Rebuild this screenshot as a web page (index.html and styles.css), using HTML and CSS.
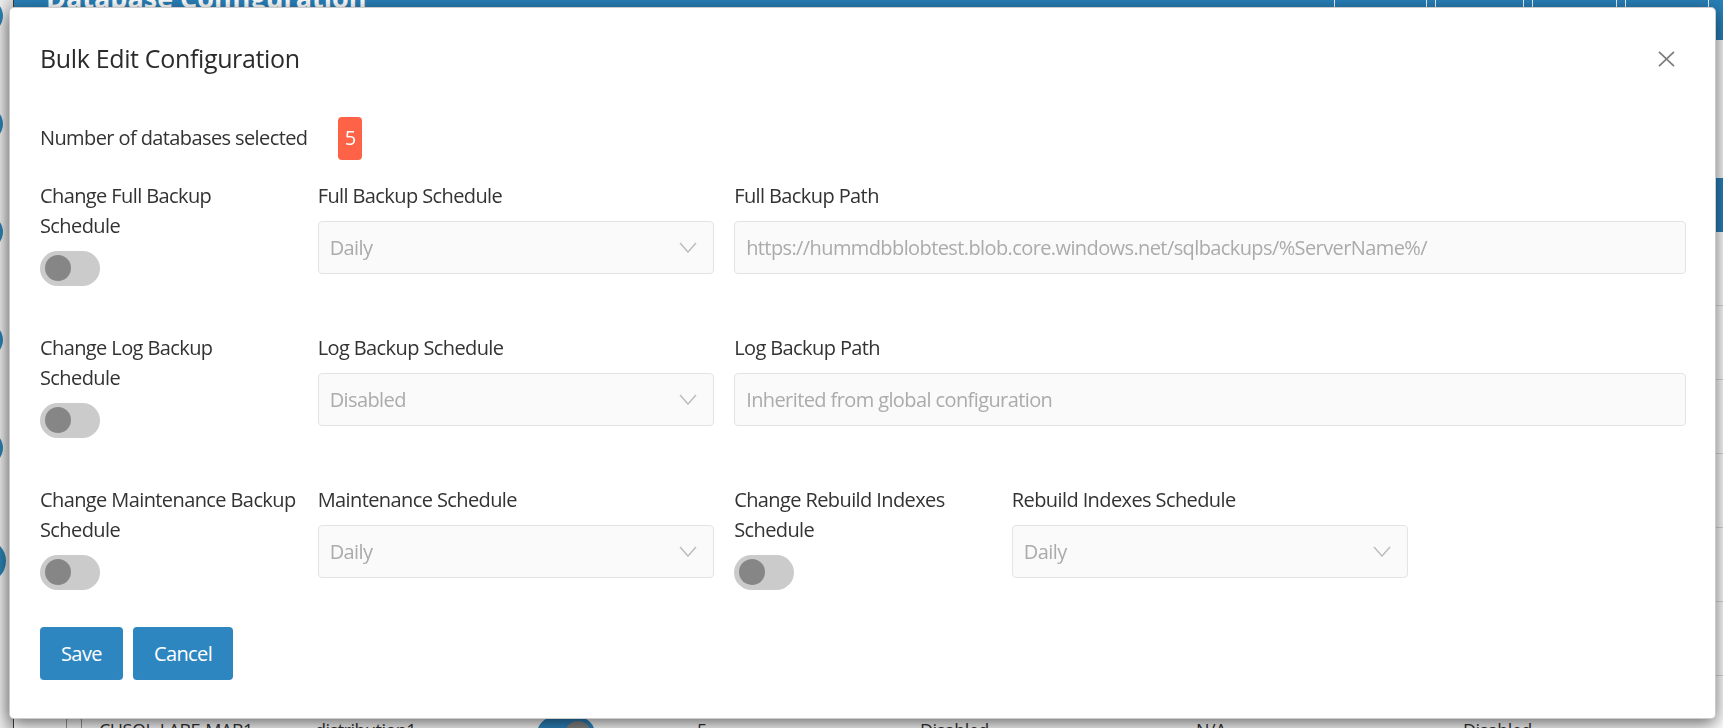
FILE: index.html
```html
<!DOCTYPE html>
<html lang="en">
<head>
<meta charset="utf-8">
<title>Bulk Edit Configuration</title>
<link rel="stylesheet" href="styles.css">
</head>
<body>
<div class="page">
  <aside class="rail">
    <span class="dot"></span><span class="dot"></span><span class="dot"></span>
    <span class="dot"></span><span class="dot"></span><span class="dot dot-big"></span>
  </aside>
  <main class="main">
    <header class="hero">
      <h1 class="hero-title">Database Configuration</h1>
      <div class="hero-tools">
        <span class="tool t1"></span><span class="tool t2"></span><span class="tool t3"></span><span class="tool t4"></span>
      </div>
    </header>
    <div class="spacer"></div>
    <div class="thead"></div>
    <div class="row"></div>
    <div class="row"></div>
    <div class="row"></div>
    <div class="row"></div>
    <div class="row"></div>
    <div class="row"></div>
    <div class="row row-last">
      <span></span>
      <span class="cb"></span>
      <span>CHSQL-LABE-MAB1</span>
      <span>distribution1</span>
      <span class="mini-toggle"><span class="mini-knob"></span></span>
      <span>5</span>
      <span>Disabled</span>
      <span>N/A</span>
      <span>Disabled</span>
    </div>
  </main>
</div>

<div class="modal" role="dialog" aria-labelledby="bulk-title">
  <div class="modal-header">
    <h4 class="modal-title" id="bulk-title">Bulk Edit Configuration</h4>
    <button class="close" type="button" aria-label="Close">
      <svg width="17" height="16" viewBox="0 0 17 16"><path d="M1 0.8 L16 15.2 M16 0.8 L1 15.2" stroke="#7d7d7d" stroke-width="1.7" fill="none"/></svg>
    </button>
  </div>

  <div class="count-row">
    <span class="count-label">Number of databases selected</span>
    <span class="badge">5</span>
  </div>

  <div class="grid">
    <div class="field span2">
      <label>Change Full Backup<br>Schedule</label>
      <div class="toggle"><span class="knob"></span></div>
    </div>
    <div class="field span3">
      <label>Full Backup Schedule</label>
      <div class="control select">Daily<svg width="18" height="11" viewBox="0 0 18 11"><path d="M1 1 L9 10 L17 1" fill="none" stroke="#bdbdbd" stroke-width="1.5"/></svg></div>
    </div>
    <div class="field span7">
      <label>Full Backup Path</label>
      <div class="control">https://hummdbblobtest.blob.core.windows.net/sqlbackups/%ServerName%/</div>
    </div>

    <div class="field span2">
      <label>Change Log Backup<br>Schedule</label>
      <div class="toggle"><span class="knob"></span></div>
    </div>
    <div class="field span3">
      <label>Log Backup Schedule</label>
      <div class="control select">Disabled<svg width="18" height="11" viewBox="0 0 18 11"><path d="M1 1 L9 10 L17 1" fill="none" stroke="#bdbdbd" stroke-width="1.5"/></svg></div>
    </div>
    <div class="field span7">
      <label>Log Backup Path</label>
      <div class="control">Inherited from global configuration</div>
    </div>

    <div class="field span2">
      <label>Change Maintenance Backup<br>Schedule</label>
      <div class="toggle"><span class="knob"></span></div>
    </div>
    <div class="field span3">
      <label>Maintenance Schedule</label>
      <div class="control select">Daily<svg width="18" height="11" viewBox="0 0 18 11"><path d="M1 1 L9 10 L17 1" fill="none" stroke="#bdbdbd" stroke-width="1.5"/></svg></div>
    </div>
    <div class="field span2">
      <label>Change Rebuild Indexes<br>Schedule</label>
      <div class="toggle"><span class="knob"></span></div>
    </div>
    <div class="field span3">
      <label>Rebuild Indexes Schedule</label>
      <div class="control select">Daily<svg width="18" height="11" viewBox="0 0 18 11"><path d="M1 1 L9 10 L17 1" fill="none" stroke="#bdbdbd" stroke-width="1.5"/></svg></div>
    </div>
  </div>

  <div class="actions">
    <button class="btn" type="button">Save</button>
    <button class="btn" type="button">Cancel</button>
  </div>
</div>
</body>
</html>
```

FILE: styles.css
```css
* { box-sizing: border-box; }

html, body {
  margin: 0;
  height: 100%;
}

body {
  font-family: "Open Sans", "Liberation Sans", sans-serif;
  background: #f2f2f2;
  color: #333;
  overflow: hidden;
}

/* ---------- page behind the dialog ---------- */
.page {
  display: flex;
  height: 728px;
}

.rail {
  width: 14px;
  flex: none;
  background: linear-gradient(to right, #ececec, #d6d6d6);
  border-right: 1px solid #3c3c3c;
  display: flex;
  flex-direction: column;
  gap: 74px;
  overflow: hidden;
}

.dot {
  flex: none;
  width: 34px;
  height: 34px;
  margin-left: -31px;
  margin-top: -1px;
  border-radius: 50%;
  background: #2a7fb0;
}

.dot + .dot { margin-top: 0; }

.dot-big {
  width: 44px;
  height: 44px;
  margin-left: -38px;
}

.main {
  flex: 1;
  min-width: 0;
  background: #fff;
}

.hero {
  height: 40px;
  background: #2980b9;
  display: flex;
  justify-content: space-between;
  align-items: flex-start;
  overflow: hidden;
}

.hero-title {
  margin: -22px 0 0 32px;
  font-size: 27px;
  line-height: 40px;
  font-weight: 700;
  color: #fff;
  white-space: nowrap;
}

.hero-tools {
  display: flex;
  align-self: stretch;
  gap: 8px;
  margin-right: 14px;
}

.tool {
  border: 1px solid rgba(255, 255, 255, 0.9);
  border-top: 0;
  margin-bottom: 2px;
}

.t1 { width: 93px; }
.t2 { width: 89px; }
.t3 { width: 85px; }
.t4 { width: 84px; }

.spacer {
  height: 138px;
  background: #fafafa;
}

.thead {
  height: 54px;
  background: #2980b9;
}

.row {
  height: 74px;
  border-bottom: 1px solid #d9d9d9;
  background: #fff;
}

.row-last {
  display: grid;
  grid-template-columns: 52px 33px 216px 222px 160px 223px 276px 267px 1fr;
  align-items: start;
  padding-top: 39px;
  font-size: 18px;
  line-height: 30px;
  letter-spacing: -0.5px;
  color: #333;
  border-bottom: 0;
}

.cb {
  width: 16px;
  height: 24px;
  margin-top: 3px;
  border: 1px solid #999;
  border-radius: 2px;
  background: #fff;
}

.mini-toggle {
  width: 58px;
  height: 34px;
  margin-top: 2px;
  border-radius: 17px;
  background: #2e86c1;
  padding: 4px;
  display: flex;
  justify-content: flex-end;
}

.mini-knob {
  width: 26px;
  height: 26px;
  border-radius: 50%;
  background: #888;
}

/* ---------- dialog ---------- */
.modal {
  position: fixed;
  top: 7px;
  left: 9px;
  width: 1707px;
  height: 712px;
  background: #fff;
  border: 1px solid rgba(0, 0, 0, 0.2);
  border-radius: 5px;
  box-shadow: 0 5px 18px rgba(0, 0, 0, 0.6);
  padding: 32px 29px 0 30px;
  font-size: 20px;
  letter-spacing: -0.6px;
  color: #333;
}

.modal-header {
  display: flex;
  align-items: center;
  justify-content: space-between;
}

.modal-title {
  margin: 0;
  font-size: 25px;
  line-height: 37.5px;
  font-weight: 500;
  letter-spacing: -0.35px;
  color: #2b2b2b;
}

.close {
  display: block;
  width: 17px;
  height: 16px;
  margin-right: 11px;
  padding: 0;
  border: 0;
  background: none;
}

.close svg { display: block; }

.count-row {
  display: flex;
  align-items: center;
  height: 42.5px;
  margin-top: 39.5px;
  line-height: 30px;
}

.badge {
  display: flex;
  align-items: center;
  justify-content: center;
  width: 24px;
  height: 42.5px;
  margin-left: 31px;
  border-radius: 4px;
  background: #ff6347;
  color: #fff;
  letter-spacing: 0;
}

.grid {
  display: grid;
  grid-template-columns: repeat(12, 1fr);
  column-gap: 20px;
  row-gap: 47px;
  margin-top: 21px;
}

.span2 { grid-column: span 2; }
.span3 { grid-column: span 3; }
.span7 { grid-column: span 7; }

.field label {
  display: block;
  line-height: 30px;
  white-space: nowrap;
}

.control {
  display: flex;
  align-items: center;
  justify-content: space-between;
  height: 53px;
  margin-top: 10px;
  padding: 0 16px 0 11px;
  border: 1px solid #e4e4e4;
  border-radius: 4px;
  background: #fafafa;
  color: #ababab;
  white-space: nowrap;
  overflow: hidden;
}

.control svg { flex: none; }

.toggle {
  width: 60px;
  height: 35px;
  margin-top: 10px;
  padding: 4.5px;
  border-radius: 18px;
  background: #cbcbcb;
}

.knob {
  display: block;
  width: 26px;
  height: 26px;
  border-radius: 50%;
  background: #868686;
}

.actions {
  display: flex;
  gap: 10px;
  margin-top: 37px;
}

.btn {
  height: 53px;
  padding: 0 21px;
  border: 0;
  border-radius: 4px;
  background: #2e86c1;
  color: #fff;
  font: inherit;
  font-size: 20px;
  letter-spacing: -0.6px;
}
```
